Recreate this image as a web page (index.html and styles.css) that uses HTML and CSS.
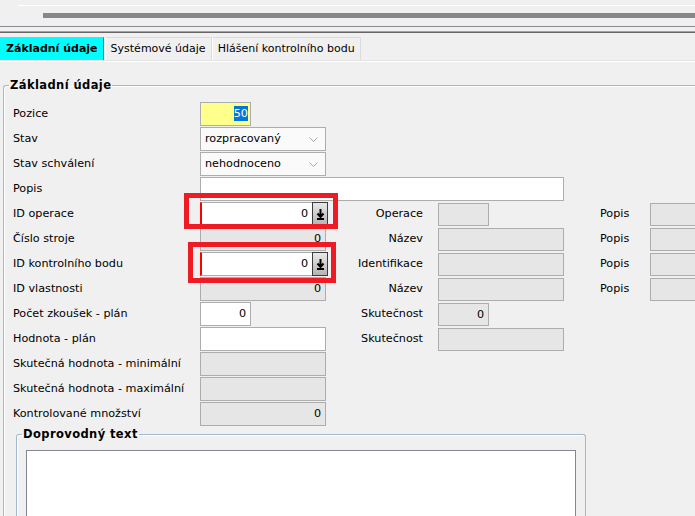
FILE: index.html
```html
<!DOCTYPE html>
<html lang="cs">
<head>
  <meta charset="UTF-8">
  <title>Kontrolní bod</title>
  <link rel="stylesheet" href="styles.css">
</head>
<body>
  <div class="toolbar">
    <div class="tb-line"></div>
    <div class="tb-bar"></div>
    <div class="tb-sep1"></div>
    <div class="tb-sep2"></div>
  </div>

  <div class="tabs">
    <div class="tab active">Základní údaje</div>
    <div class="tab">Systémové údaje</div>
    <div class="tab">Hlášení kontrolního bodu</div>
  </div>
  <div class="tabs-line"></div>

  <fieldset class="group main">
    <legend>Základní údaje</legend>
    <div class="form">
      <div class="lbl">Pozice</div>
      <div class="fld small yellow"><span class="sel">50</span></div>

      <div class="lbl">Stav</div>
      <div class="fld combo">rozpracovaný<svg class="chev" width="9" height="6" viewBox="0 0 9 6"><polyline points="0.5,0.5 4.5,4.5 8.5,0.5" fill="none" stroke="#a8a8a8" stroke-width="1"/></svg></div>

      <div class="lbl">Stav schválení</div>
      <div class="fld combo">nehodnoceno<svg class="chev" width="9" height="6" viewBox="0 0 9 6"><polyline points="0.5,0.5 4.5,4.5 8.5,0.5" fill="none" stroke="#a8a8a8" stroke-width="1"/></svg></div>

      <div class="lbl">Popis</div>
      <div class="fld white wide"></div>

      <div class="lbl">ID operace</div>
      <div class="fld lookup"><span class="num">0</span><span class="pick"><svg width="9" height="13" viewBox="0 0 9 13"><path d="M4.5 1v7M1.5 5.5l3 3.5 3-3.5" fill="none" stroke="#000" stroke-width="2"/><rect x="1" y="10" width="7" height="2" fill="#000"/></svg></span></div>
      <div class="lbl2">Operace</div>
      <div class="fld ro small r"></div>
      <div class="lbl3">Popis</div>
      <div class="fld ro r rest"></div>

      <div class="lbl">Číslo stroje</div>
      <div class="fld ro num-right">0</div>
      <div class="lbl2">Název</div>
      <div class="fld ro r"></div>
      <div class="lbl3">Popis</div>
      <div class="fld ro r rest"></div>

      <div class="lbl">ID kontrolního bodu</div>
      <div class="fld lookup"><span class="num">0</span><span class="pick"><svg width="9" height="13" viewBox="0 0 9 13"><path d="M4.5 1v7M1.5 5.5l3 3.5 3-3.5" fill="none" stroke="#000" stroke-width="2"/><rect x="1" y="10" width="7" height="2" fill="#000"/></svg></span></div>
      <div class="lbl2">Identifikace</div>
      <div class="fld ro r"></div>
      <div class="lbl3">Popis</div>
      <div class="fld ro r rest"></div>

      <div class="lbl">ID vlastnosti</div>
      <div class="fld ro num-right">0</div>
      <div class="lbl2">Název</div>
      <div class="fld ro r"></div>
      <div class="lbl3">Popis</div>
      <div class="fld ro r rest"></div>

      <div class="lbl">Počet zkoušek - plán</div>
      <div class="fld white small num-right">0</div>
      <div class="lbl2">Skutečnost</div>
      <div class="fld ro small r num-right">0</div>

      <div class="lbl">Hodnota - plán</div>
      <div class="fld white"></div>
      <div class="lbl2">Skutečnost</div>
      <div class="fld ro r"></div>

      <div class="lbl">Skutečná hodnota - minimální</div>
      <div class="fld ro"></div>

      <div class="lbl">Skutečná hodnota - maximální</div>
      <div class="fld ro"></div>

      <div class="lbl">Kontrolované množství</div>
      <div class="fld ro num-right">0</div>
    </div>

    <fieldset class="group sub">
      <legend>Doprovodný text</legend>
      <textarea class="memo"></textarea>
    </fieldset>
  </fieldset>

  <!-- zvýraznění -->
  <div class="mark mark1"></div>
  <div class="mark mark2"></div>
</body>
</html>
```

FILE: styles.css
```css
body {
  margin: 0;
  width: 695px;
  height: 516px;
  overflow: hidden;
  position: relative;
  display: flex;
  flex-direction: column;
  background-color: #f0f0f0;
  font-family: "DejaVu Sans", sans-serif;
  font-size: 11.2px;
  color: #000;
}
.toolbar {
  height: 33px;
  flex: none;
}
.tb-line {
  margin: 5px 0 0 18px;
  height: 1px;
  background-color: #fff;
}
.tb-bar {
  margin: 7px 0 0 43px;
  height: 5px;
  background-color: #878787;
}
.tb-sep1 {
  margin-top: 8px;
  height: 1px;
  background-color: #8a8a94;
}
.tb-sep2 {
  margin-top: 4px;
  height: 2px;
  border-top: 1px solid #a0a0a0;
  background-color: #666;
  box-sizing: border-box;
}
.tabs {
  display: flex;
  flex: none;
  margin-top: 4px;
  height: 23px;
}
.tab {
  padding: 0 5px;
  line-height: 22px;
  font-size: 11px;
  border: 1px solid #dcdcdc;
  border-bottom: none;
  border-left-color: #fff;
}
.tab.active {
  background-color: #00ffff;
  font-weight: bold;
  border-color: #00ffff;
  border-right: 1px solid #707070;
  margin-right: 1px;
}
.tabs-line {
  flex: none;
  height: 1px;
  background-color: #e3e3e3;
  border-bottom: 1px solid #fff;
}
.group {
  border: 1px solid #a5b8cb;
  border-radius: 3px;
  box-shadow: inset 1px 1px 0 #fff;
  margin: 0;
  padding: 0;
  min-width: 0;
}
.group legend {
  font-weight: bold;
  font-size: 11.5px;
  letter-spacing: 0.4px;
  padding: 0 1px;
  margin-left: -4px;
  line-height: 16px;
}
.main {
  flex: 1;
  min-height: 0;
  display: flex;
  flex-direction: column;
  margin: 15px 0 0 3px;
  padding: 9px 0 0 9px;
  border-right: none;
  border-bottom: none;
  border-radius: 3px 0 0 0;
}
.form {
  display: grid;
  grid-template-columns: 187px 136px 102px 162px 50px 1fr;
  grid-auto-rows: 25px;
  align-items: start;
}
.lbl, .lbl2, .lbl3 {
  line-height: 24px;
  white-space: nowrap;
}
.lbl {
  grid-column: 1;
}
.lbl2 {
  grid-column: 3;
  text-align: right;
  padding-right: 15px;
}
.lbl3 {
  grid-column: 5;
}
.fld {
  box-sizing: border-box;
  width: 126px;
  height: 24px;
  line-height: 22px;
  border: 1px solid #adadad;
  padding: 0 4px;
  position: relative;
  white-space: nowrap;
}
.fld.r {
  height: 23px;
  margin-top: 1px;
}
.fld.small {
  width: 51px;
}
.fld.wide {
  grid-column: 2 / span 3;
  width: 364px;
}
.fld.rest {
  width: 45px;
  border-right: none;
}
.ro {
  background-color: #e6e6e6;
}
.white {
  background-color: #fff;
}
.yellow {
  background-color: #ffff8c;
  text-align: right;
  padding-right: 2px;
}
.sel {
  background-color: #0078d7;
  color: #fff;
  padding: 1px 0;
}
.combo {
  background-color: #fafafa;
}
.chev {
  position: absolute;
  right: 7px;
  top: 9px;
}
.num-right {
  text-align: right;
}
.lookup {
  background-color: #fff;
  border-left: 2px solid #ff0000;
  display: flex;
  justify-content: flex-end;
  padding: 0;
  width: 128px;
  border-right: none;
}
.lookup .num {
  padding-right: 4px;
}
.pick {
  width: 16px;
  height: 24px;
  margin-top: -1px;
  box-sizing: border-box;
  border: 1px solid #3c3c3c;
  background: linear-gradient(#e8e8e8, #b4b4b4);
  display: flex;
  align-items: center;
  justify-content: center;
}
.sub {
  flex: 1;
  min-height: 0;
  display: flex;
  flex-direction: column;
  margin: -1px 0 0 3px;
  width: 570px;
  padding: 8px 0 0 9px;
  box-sizing: border-box;
  border-bottom: none;
  border-radius: 3px 3px 0 0;
}
.memo {
  flex: 1;
  display: block;
  width: 550px;
  border: 1px solid #828790;
  border-bottom: none;
  background-color: #fff;
  resize: none;
  margin: 0;
  padding: 0;
  box-sizing: border-box;
}
.mark {
  position: absolute;
  border: 5px solid #ed1c24;
  box-sizing: border-box;
}
.mark1 {
  left: 184px;
  top: 193px;
  width: 154px;
  height: 36px;
}
.mark2 {
  left: 188px;
  top: 242px;
  width: 148px;
  height: 41px;
}
```
